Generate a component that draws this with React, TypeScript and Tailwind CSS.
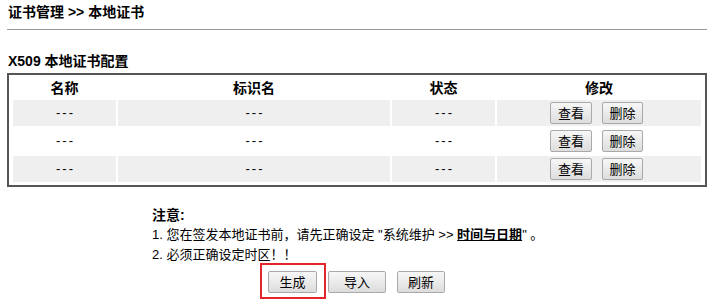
import React from "react";

const font = { fontFamily: '"Liberation Sans", "Noto Sans CJK SC", sans-serif' };

function Btn({ children, w }: { children: React.ReactNode; w: string }) {
  return (
    <button
      className={`${w} h-[22px] flex items-center justify-center rounded-[2px] border border-[#a9a9a9] bg-gradient-to-b from-[#f7f7f7] to-[#dddddd] text-[13px] leading-none text-black`}
    >
      {children}
    </button>
  );
}

const rows = [0, 1, 2];

export default function App() {
  return (
    <div className="w-[721px] h-[307px] bg-white text-black overflow-hidden" style={font}>
      <div className="h-[24px] pl-[8px] flex items-center text-[14px] font-bold leading-[16px]">
        证书管理 &gt;&gt; 本地证书
      </div>
      <div className="ml-[7px] mt-[5px] w-[700px] h-px bg-[#9a9a9a]" />
      <div className="pl-[8px] pt-[23px] h-[43px] text-[14px] font-bold leading-[16px]">
        X509 本地证书配置
      </div>
      <div className="ml-[7px] w-[700px] border-2 border-[#555555] pt-[4px] pb-[3px] px-[4px]">
        <div className="grid grid-cols-[103px_272px_103px_204px] gap-[2px]">
          {["名称", "标识名", "状态", "修改"].map((h) => (
            <div key={h} className="h-[19px] flex items-center justify-center text-[14px] font-bold">
              {h}
            </div>
          ))}
          {rows.map((r) => {
            const bg = r % 2 === 0 ? "bg-[#efefef]" : "bg-white";
            return (
              <React.Fragment key={r}>
                <div className={`${bg} h-[26px] flex items-center justify-center text-[13px] tracking-[2px] pl-[2px]`}>---</div>
                <div className={`${bg} h-[26px] flex items-center justify-center text-[13px] tracking-[2px] pl-[2px]`}>---</div>
                <div className={`${bg} h-[26px] flex items-center justify-center text-[13px] tracking-[2px] pl-[2px]`}>---</div>
                <div className={`${bg} h-[26px] flex items-center justify-center gap-[10px] pr-[5px]`}>
                  <Btn w="w-[42px]">查看</Btn>
                  <Btn w="w-[41px]">删除</Btn>
                </div>
              </React.Fragment>
            );
          })}
        </div>
      </div>
      <div className="mt-[18px] pl-[152px] text-[13px] leading-[20px]">
        <div className="font-bold text-[14px]">注意:</div>
        <div>
          1. 您在签发本地证书前，请先正确设定 "系统维护 &gt;&gt;{" "}
          <span className="font-bold underline">时间与日期</span>" 。
        </div>
        <div>2. 必须正确设定时区！！</div>
      </div>
      <div className="mt-[6px] ml-[268px] flex items-center gap-[11px]">
        <div className="relative">
          <Btn w="w-[49px]">生成</Btn>
          <div className="absolute left-[-8px] top-[-8px] w-[66px] h-[36px] border-2 border-[#e3262d]" />
        </div>
        <Btn w="w-[58px]">导入</Btn>
        <Btn w="w-[48px]">刷新</Btn>
      </div>
    </div>
  );
}
